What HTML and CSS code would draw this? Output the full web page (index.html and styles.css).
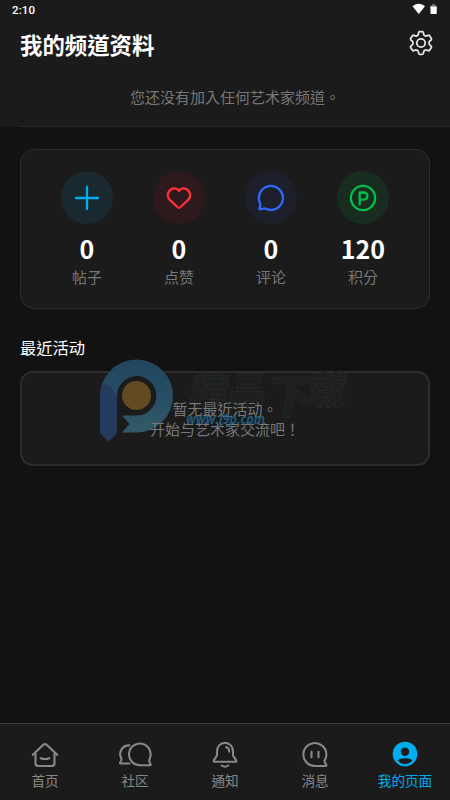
FILE: index.html
```html
<!DOCTYPE html>
<html lang="zh-Hant">
<head>
<meta charset="utf-8">
<title>我的频道资料</title>
<link rel="stylesheet" href="styles.css">
</head>
<body>
<div class="app">
  <header class="header">
    <div class="status">
      <span class="time">2:10</span>
      <svg class="status-icons" width="28" height="14" viewBox="0 0 28 14">
        <path d="M.5 3.300C4-.1 9.500-.1 13 3.300L6.750 11Z" fill="#fff"/>
        <path d="M20.200 1h2.600v1.500h2v3h-6.600v-3h2Z" fill="#777"/>
        <rect x="18.500" y="3.500" width="6.200" height="7.400" rx=".6" fill="#fff"/>
      </svg>
    </div>
    <div class="title-row">
      <h1>我的频道资料</h1>
      <svg class="gear" width="26" height="26" viewBox="0 0 26 26" fill="none" stroke="#e4e4e4" stroke-width="1.800" stroke-linejoin="round">
        <path d="M10.300 4.300 10.700 2.500Q11 1.700 11.800 1.700h2.400q.8 0 1.100.8l.4 1.800q.2.900 1.100 1.400t1.800.2l1.800-.6q.8-.2 1.200.5l1.700 2.700q.4.700-.1 1.300l-1.500 1.400q-.7.700-.7 1.800t.7 1.800l1.500 1.400q.5.600.1 1.300l-1.700 2.700q-.4.700-1.200.5l-1.800-.6q-.9-.3-1.800.2t-1.100 1.400l-.4 1.800q-.3.800-1.100.8h-2.400q-.8 0-1.100-.8l-.4-1.800q-.2-.9-1.100-1.400t-1.800-.2l-1.800.6q-.8.200-1.200-.5l-1.700-2.700q-.4-.7.1-1.300l1.500-1.400q.7-.7.7-1.800t-.7-1.800L2.800 9.800q-.5-.6-.1-1.300l1.700-2.700q.4-.7 1.200-.5l1.800.6q.9.300 1.800-.2t1.100-1.400Z"/>
        <circle cx="13" cy="13" r="4.200"/>
      </svg>
    </div>
    <p class="no-channel">您还没有加入任何艺术家频道。</p>
  </header>
  <main>
    <section class="stats">
      <div class="stat">
        <span class="badge cyan"><svg width="28" height="28" viewBox="0 0 28 28"><path d="M14 3v22M3 14h22"/></svg></span>
        <strong>0</strong><span class="label">帖子</span>
      </div>
      <div class="stat">
        <span class="badge red"><svg width="28" height="28" viewBox="0 0 28 28"><path d="M14 6.900C12.200 4.100 8.700 3.600 6 5.500 1.800 8.400 2.100 13 4.600 15.700L12.400 23q1.600 1.400 3.200 0l7.800-7.300C25.900 13 26.200 8.400 22 5.500c-2.700-1.900-6.200-1.400-8 1.400Z"/></svg></span>
        <strong>0</strong><span class="label">点赞</span>
      </div>
      <div class="stat">
        <span class="badge blue"><svg width="28" height="28" viewBox="0 0 28 28"><path d="M3.100 19.200A12 12 0 1 1 8.800 24.800Q7.700 24.300 6.500 24.600L3.700 25.200Q2.200 25.500 2.500 24L3.300 21.300Q3.500 20.300 3.100 19.200Z"/></svg></span>
        <strong>0</strong><span class="label">评论</span>
      </div>
      <div class="stat">
        <span class="badge green"><svg width="28" height="28" viewBox="0 0 28 28"><circle cx="14" cy="14" r="12.100"/><path d="M10.700 20.500V8.500h4.200a3.600 3.600 0 0 1 0 7.200h-4.200"/></svg></span>
        <strong>120</strong><span class="label">积分</span>
      </div>
    </section>
    <h2>最近活动</h2>
    <section class="activity">
      <p>暂无最近活动。<br>开始与艺术家交流吧！</p>
      <div class="watermark">
        <svg width="74" height="84" viewBox="0 0 74 84">
          <defs><linearGradient id="ring" x1="0" y1="0" x2="0" y2="1"><stop offset="0" stop-color="#22465f"/><stop offset=".55" stop-color="#274f66"/><stop offset="1" stop-color="#345a65"/></linearGradient></defs>
          <path fill="url(#ring)" fill-rule="evenodd" d="M0 37A36.500 36.500 0 1 1 36.500 73.500H22L29.500 65 22 56.500H37A19.700 19.700 0 1 0 17 37V74H0Z"/>
          <path fill="#253b5d" d="M0 37Q0 29 4 24Q12 27 17 37V74L8.500 82.500 0 74Z"/>
          <circle cx="36.500" cy="36.500" r="14.500" fill="#624b20"/>
        </svg>
        <svg class="brand" width="165" height="74" viewBox="0 0 165 74">
          <g transform="skewX(-9)"><text x="8" y="36" class="brand-name" textLength="76" lengthAdjust="spacingAndGlyphs">精品</text><text x="86" y="44" class="brand-name brand-large">下</text><text x="126" y="35" class="brand-name">载</text></g>
        </svg>
      </div>
      <svg class="url" width="82" height="24" viewBox="0 0 82 24"><text x="0" y="14" class="brand-url" textLength="79" lengthAdjust="spacingAndGlyphs">www.j9p.com</text></svg>
    </section>
  </main>
  <nav>
    <a><svg width="34" height="30" viewBox="0 0 34 30"><path d="M4.800 14.800 15.300 4.800q1.700-1.500 3.400 0L29.200 14.800M7.500 13v10.200q0 2.800 2.800 2.800h13.400q2.800 0 2.800-2.800V13M12.700 18.200q4.300 1.700 8.600 0"/></svg><span>首页</span></a>
    <a><svg width="34" height="30" viewBox="0 0 34 30"><path d="M31.500 19.200A10.800 10.800 0 1 0 22.300 25.200H32Q33 25.200 32.500 24.200L31.400 21.700Q31 20.600 31.500 19.200ZM11.300 5.400C4.500 5.200.1 12 3.200 18.200Q3.700 19.500 3.200 20.600L2.200 22.600Q1.700 23.500 2.800 23.500H11.500"/></svg><span>社区</span></a>
    <a><svg width="34" height="30" viewBox="0 0 34 30"><path d="M17 2.900c-5 0-8 3.800-8 8.500v4.200L5.900 20.200q-.7 1.500 1 1.500h20.200q1.700 0 1-1.500L25 15.600v-4.200c0-4.700-3-8.500-8-8.500ZM13.700 25.500q3.300 2.500 6.600 0M18.200 7.100q3 .6 3 4.500"/></svg><span>通知</span></a>
    <a><svg width="34" height="30" viewBox="0 0 34 30"><path d="M26.900 20.100A11.500 11.500 0 1 0 17 26h10.500q1.300 0 .7-1.200L26.800 22.300q-.6-1 .1-2.200ZM13.500 11.800v5.400M20.500 11.800v5.400"/></svg><span>消息</span></a>
    <a class="active"><svg width="34" height="30" viewBox="0 0 34 30"><circle class="profile" cx="17" cy="14" r="12.300"/><circle class="cut" cx="17" cy="11.700" r="4.200"/><path class="cut" d="M9.600 20.500Q12 18.200 17 18.200t7.400 2.300Q21.500 24.100 17 24.100T9.600 20.500Z"/></svg><span>我的页面</span></a>
  </nav>
</div>
</body>
</html>
```
FILE: styles.css
```css
* { box-sizing: border-box; }
body { margin: 0; background: #121212; color: #fff; font-family: "Noto Sans CJK TC", sans-serif; }
h1, h2, p { margin: 0; }
.app { height: 800px; display: flex; flex-direction: column; overflow: hidden; }
.header { height: 127px; background: #1b1b1b; display: flex; flex-direction: column; }
.header::after { content: ""; height: 1px; background: #282828; margin: auto 0 0 20px; }
.status { height: 20px; padding: 3px 10px 0 12px; display: flex; justify-content: space-between; }
.time { font: 500 11.500px/15px Roboto, sans-serif; letter-spacing: .1px; }
.title-row { height: 48px; padding: 0 16px 0 20px; display: flex; align-items: center; justify-content: space-between; }
.gear { margin-top: -2px; }
h1 { font-size: 22.400px; line-height: 32px; font-weight: 700; }
.no-channel { margin-top: 19px; padding-left: 20px; text-align: center; font-size: 15px; line-height: 20px; color: #777; }
main { flex: 1; padding: 22px 20px 0; }
.stats { height: 160px; border: 1px solid #2d2d2d; border-radius: 14px; background: #1b1b1b; padding: 21px 20px 0; display: grid; grid-template-columns: repeat(4, 1fr); }
.stat { display: flex; flex-direction: column; align-items: center; }
.badge { width: 52px; height: 53px; border-radius: 50%; display: flex; align-items: center; justify-content: center; }
.badge svg { fill: none; stroke: currentColor; stroke-width: 2.300; stroke-linecap: round; stroke-linejoin: round; }
.cyan { color: #00aeef; background: #19292f; }
.red { color: #ff3038; background: #2e191d; }
.blue { color: #3268ff; background: #1d1f2b; }
.green { color: #00bf4b; background: #192c20; }
.stat strong { font-size: 25px; line-height: 30px; margin-top: 9px; }
.label { font-size: 15px; line-height: 20px; color: #777; margin-top: 4px; }
h2 { margin-top: 28px; font-size: 16.300px; line-height: 20px; font-weight: 400; }
.activity { position: relative; margin-top: 14px; height: 95px; border: 2px solid #2d2d2d; border-radius: 13px; background: #1b1b1b; padding-top: 26px; text-align: center; color: #777; font-size: 15px; line-height: 20px; }
.activity p { position: relative; z-index: 1; }
.watermark { position: absolute; left: 78px; top: -14px; display: flex; align-items: flex-start; gap: 12px; }
.brand { margin-top: 10px; overflow: visible; }
.brand-name { font: 900 38px "Noto Sans CJK SC", sans-serif; fill: #1d1f20; stroke: #292b2b; stroke-width: .7; stroke-dasharray: 5 1; }
.brand-large { font-size: 46px; }
.url { position: absolute; z-index: 2; left: 164px; top: 37px; overflow: visible; }
.brand-url { font: italic 700 14px "Open Sans", sans-serif; fill: #225f80; fill-opacity: .92; }
nav { height: 77px; border-top: 1px solid #3b3b3b; background: #1b1b1b; display: grid; grid-template-columns: repeat(5, 1fr); }
nav a { display: flex; flex-direction: column; align-items: center; padding-top: 16px; color: #888; font-size: 13.600px; line-height: 20px; }
nav svg { fill: none; stroke: currentColor; stroke-width: 2.100; stroke-linecap: round; stroke-linejoin: round; }
nav .active { color: #00aeef; }
nav .profile { fill: #00aeef; stroke: none; }
nav .cut { fill: #1b1b1b; stroke: none; }
```
